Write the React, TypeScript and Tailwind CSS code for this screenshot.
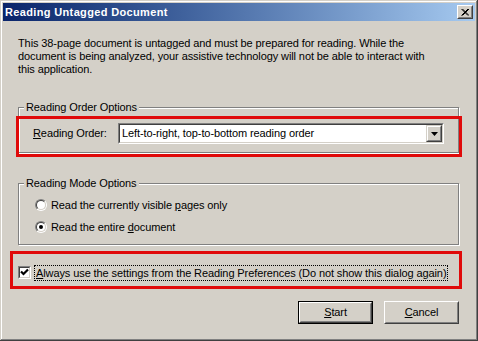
const font = "font-['Liberation_Sans',Arial,sans-serif]";

function Radio({ checked }: { checked?: boolean }) {
  return (
    <span className="w-[12px] h-[12px] rounded-full border border-t-[#808080] border-l-[#808080] border-b-white border-r-white flex">
      <span className="flex-1 rounded-full border border-t-[#404040] border-l-[#404040] border-b-[#d4d0c8] border-r-[#d4d0c8] bg-white flex items-center justify-center">
        {checked && <span className="w-[4px] h-[4px] rounded-full bg-black" />}
      </span>
    </span>
  );
}

function Checkbox() {
  return (
    <span className="w-[13px] h-[13px] border border-t-[#808080] border-l-[#808080] border-b-white border-r-white flex shrink-0">
      <span className="flex-1 border border-t-[#404040] border-l-[#404040] border-b-[#d4d0c8] border-r-[#d4d0c8] bg-white flex items-center justify-center">
        <svg width="9" height="9" viewBox="0 0 9 9">
          <path d="M1 3.5 L3.5 6 L8 1.5" stroke="#000" strokeWidth="2.2" fill="none" />
        </svg>
      </span>
    </span>
  );
}

export default function App() {
  return (
    <div
      className={`relative w-[478px] h-[341px] bg-[#d4d0c8] p-[3px] flex flex-col text-[11px] leading-[13px] tracking-[-0.1px] text-black ${font} shadow-[inset_-1px_-1px_0_#404040,inset_1px_1px_0_#d4d0c8,inset_-2px_-2px_0_#808080,inset_2px_2px_0_#fff]`}
    >
      {/* Title bar */}
      <div className="h-[18px] flex items-center pl-[2px] pr-[2px] bg-linear-to-r from-[#0a246a] to-[#a6caf0]">
        <span className="flex-1 text-white font-bold tracking-[0.35px]">Reading Untagged Document</span>
        <button className="w-[16px] h-[14px] flex border border-t-white border-l-white border-b-[#404040] border-r-[#404040]">
          <span className="flex-1 bg-[#d4d0c8] border border-t-[#d4d0c8] border-l-[#d4d0c8] border-b-[#808080] border-r-[#808080] flex items-center justify-center">
            <svg width="8" height="7" viewBox="0 0 8 7">
              <path d="M0.5 0 L7 6.5 M1.5 0 L8 6.5 M7 0 L0.5 6.5 M8 0 L1.5 6.5" stroke="#000" strokeWidth="1" fill="none" />
            </svg>
          </span>
        </button>
      </div>

      {/* Body */}
      <div className="flex-1 flex flex-col px-[15px]">
        <p className="mt-[16px] w-[416px]">
          This 38-page document is untagged and must be prepared for reading. While the document is being analyzed, your
          assistive technology will not be able to interact with this application.
        </p>

        <fieldset className="mt-[25px] w-[441px] border border-[#808080] shadow-[inset_1px_1px_0_#fff,1px_1px_0_#fff]">
          <legend className="ml-[5px] px-[2px] bg-[#d4d0c8]">Reading Order Options</legend>
          <div className="flex items-center pl-[14px] pt-[9px] pb-[8px]">
            <span className="w-[85px]">
              <u>R</u>eading Order:
            </span>
            <div className="w-[326px] h-[21px] flex border border-t-[#808080] border-l-[#808080] border-b-white border-r-white">
              <div className="flex-1 flex items-center bg-white border border-t-[#404040] border-l-[#404040] border-b-[#d4d0c8] border-r-[#d4d0c8]">
                <span className="flex-1 pl-[2px]">Left-to-right, top-to-bottom reading order</span>
                <span className="w-[16px] h-[17px] flex border border-t-[#d4d0c8] border-l-[#d4d0c8] border-b-[#404040] border-r-[#404040]">
                  <span className="flex-1 bg-[#d4d0c8] border border-t-white border-l-white border-b-[#808080] border-r-[#808080] flex items-center justify-center">
                    <svg width="7" height="4" viewBox="0 0 7 4">
                      <path d="M0 0 H7 L3.5 4 Z" fill="#000" />
                    </svg>
                  </span>
                </span>
              </div>
            </div>
          </div>
        </fieldset>

        <fieldset className="mt-[24px] w-[441px] border border-[#808080] shadow-[inset_1px_1px_0_#fff,1px_1px_0_#fff]">
          <legend className="ml-[5px] px-[2px] bg-[#d4d0c8]">Reading Mode Options</legend>
          <div className="flex flex-col pl-[16px] pt-[4px] pb-[6px]">
            <div className="h-[22px] flex items-center gap-[4px]">
              <Radio />
              <span>
                Read the currently visible <u>p</u>ages only
              </span>
            </div>
            <div className="h-[22px] flex items-center gap-[4px]">
              <Radio checked />
              <span>
                Read the entire <u>d</u>ocument
              </span>
            </div>
          </div>
        </fieldset>

        <div className="mt-[19px] h-[17px] flex items-center gap-[3px]">
          <Checkbox />
          <span className="border border-dotted border-black px-[1px] leading-[14px]">
            <u>A</u>lways use the settings from the Reading Preferences (Do not show this dialog again)
          </span>
        </div>

        <div className="mt-[20px] flex justify-end gap-[11px] mr-[1px]">
          <button className="w-[75px] h-[23px] flex border border-black">
            <span className="flex-1 flex border border-t-white border-l-white border-b-[#404040] border-r-[#404040]">
              <span className="flex-1 flex items-center justify-center border border-t-[#d4d0c8] border-l-[#d4d0c8] border-b-[#808080] border-r-[#808080]">
                <span>
                  <u>S</u>tart
                </span>
              </span>
            </span>
          </button>
          <button className="w-[75px] h-[23px] flex border border-t-white border-l-white border-b-[#404040] border-r-[#404040]">
            <span className="flex-1 flex items-center justify-center border border-t-[#d4d0c8] border-l-[#d4d0c8] border-b-[#808080] border-r-[#808080]">
              <span>
                <u>C</u>ancel
              </span>
            </span>
          </button>
        </div>
      </div>

      {/* Red highlight annotations */}
      <div className="absolute left-[16px] top-[116px] w-[446px] h-[41px] border-[3px] border-[#e00a0a] pointer-events-none" />
      <div className="absolute left-[10px] top-[251px] w-[452px] h-[38px] border-[3px] border-[#e00a0a] pointer-events-none" />
    </div>
  );
}
